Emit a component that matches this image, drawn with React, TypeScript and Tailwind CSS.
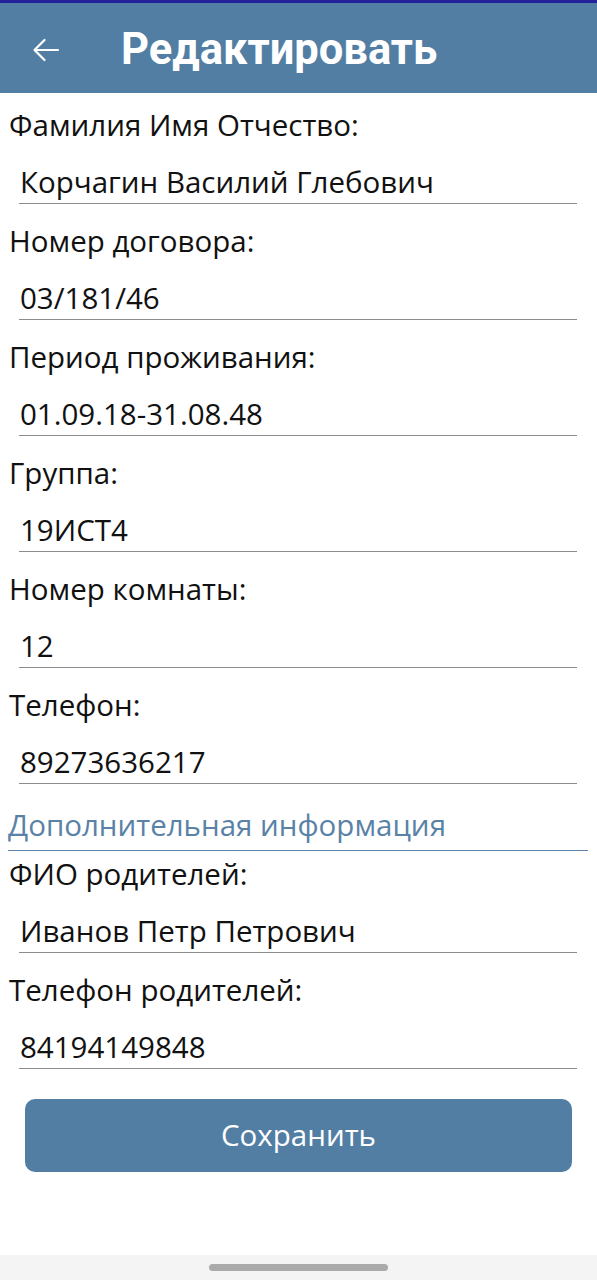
import React from "react";

const fields1 = [
  { label: "Фамилия Имя Отчество:", value: "Корчагин Василий Глебович" },
  { label: "Номер договора:", value: "03/181/46" },
  { label: "Период проживания:", value: "01.09.18-31.08.48" },
  { label: "Группа:", value: "19ИСТ4" },
  { label: "Номер комнаты:", value: "12" },
  { label: "Телефон:", value: "89273636217" },
];
const fields2 = [
  { label: "ФИО родителей:", value: "Иванов Петр Петрович" },
  { label: "Телефон родителей:", value: "84194149848" },
];

function Field({ label, value, top }: { label: string; value: string; top: string }) {
  return (
    <div className={`flex flex-col ${top}`}>
      <div className="h-[40px] leading-[40px] pl-[9px] text-[29.5px] text-[#111]">{label}</div>
      <div className="ml-[19px] mr-[20px] h-[59px] pt-[17px] border-b-[1.5px] border-[#8c8c8c]">
        <div className="h-[40px] leading-[40px] pl-[1px] text-[29.5px] text-[#111]">{value}</div>
      </div>
    </div>
  );
}

export default function App() {
  return (
    <div
      className="w-[597px] h-[1280px] flex flex-col bg-white"
      style={{ fontFamily: '"Open Sans", "Noto Sans", sans-serif' }}
    >
      <div className="h-[93px] bg-[#527ea4] border-t-[3px] border-[#23229a] pt-[4px] flex items-center">
        <div className="w-[121px] flex items-center pl-[32px]">
          <svg width="28" height="24" viewBox="0 0 28 24" fill="none" stroke="white" strokeWidth="2.2" strokeLinecap="round" strokeLinejoin="round">
            <path d="M26 12H3" />
            <path d="M12.5 2L2.5 12l10 10" />
          </svg>
        </div>
        <div
          className="text-white text-[43.5px] font-bold leading-none"
          style={{ fontFamily: 'Roboto, "Noto Sans", sans-serif' }}
        >
          Редактировать
        </div>
      </div>
      <div className="flex flex-col">
        {fields1.map((f, i) => (
          <Field key={f.label} label={f.label} value={f.value} top={i === 0 ? "mt-[12px]" : "mt-[17px]"} />
        ))}
        <div className="mt-[21px] ml-[8px] mr-[9px] pb-[5px] border-b-[1.5px] border-[#5d86aa]">
          <div className="h-[40px] leading-[40px] text-[29.5px] text-[#5a82a6]">Дополнительная информация</div>
        </div>
        {fields2.map((f, i) => (
          <Field key={f.label} label={f.label} value={f.value} top={i === 0 ? "mt-[3px]" : "mt-[17px]"} />
        ))}
        <div className="mt-[30px] mx-[25px] h-[73px] rounded-[10px] bg-[#527ea4] flex items-center justify-center text-white text-[29.5px]">
          Сохранить
        </div>
      </div>
      <div className="mt-auto h-[25px] bg-[#f4f4f4] flex items-center justify-center">
        <div className="w-[179px] h-[7px] rounded-full bg-[#aaaaaa]" />
      </div>
    </div>
  );
}
